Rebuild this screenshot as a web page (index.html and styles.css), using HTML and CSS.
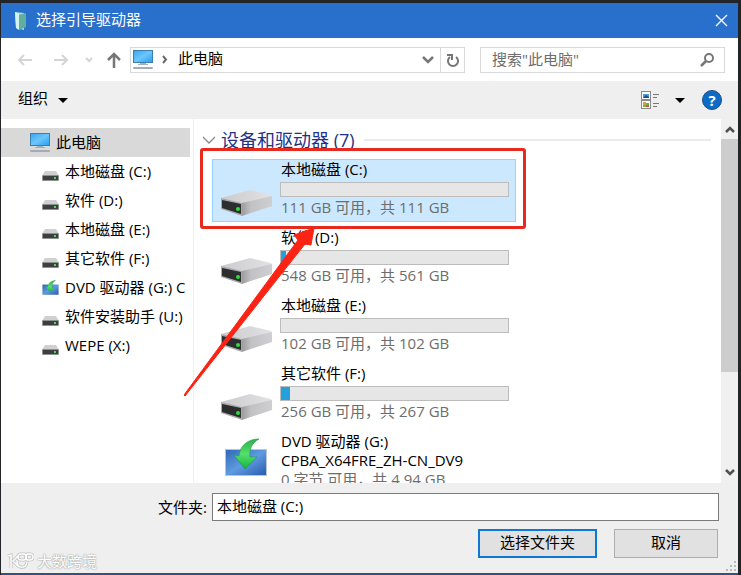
FILE: index.html
```html
<!DOCTYPE html>
<html lang="zh-CN">
<head>
    <meta charset="UTF-8">
    <meta name="viewport" content="width=device-width, initial-scale=1.0">
    <title>选择引导驱动器</title>
    <link rel="stylesheet" href="styles.css">
</head>
<body>
    <!-- shared icons -->
    <svg class="sprite" aria-hidden="true">
        <defs>
            <linearGradient id="driveTop" x1="0" y1="0" x2="1" y2="0">
                <stop offset="0" stop-color="#cbcbcd"/>
                <stop offset="1" stop-color="#e2e2e4"/>
            </linearGradient>
            <linearGradient id="driveSide" x1="0" y1="0" x2="1" y2="0">
                <stop offset="0" stop-color="#9c9c9e"/>
                <stop offset=".3" stop-color="#c2c2c4"/>
                <stop offset="1" stop-color="#cfcfd1"/>
            </linearGradient>
            <linearGradient id="screen" x1="0" y1="0" x2="1" y2="1">
                <stop offset="0" stop-color="#3aa8f0"/>
                <stop offset=".5" stop-color="#6cc6fb"/>
                <stop offset="1" stop-color="#2ba0ee"/>
            </linearGradient>
            <linearGradient id="dvd" x1="0" y1="0" x2="1" y2="1">
                <stop offset="0" stop-color="#2f68b8"/>
                <stop offset=".5" stop-color="#5f9be0"/>
                <stop offset="1" stop-color="#2a5cae"/>
            </linearGradient>
            <linearGradient id="green" x1="0" y1="0" x2="0" y2="1">
                <stop offset="0" stop-color="#2fae4c"/>
                <stop offset=".5" stop-color="#55e06c"/>
                <stop offset="1" stop-color="#12b43a"/>
            </linearGradient>
        </defs>
        <symbol id="drive" viewBox="0 0 52 27">
            <path d="M1 9 30 1 51 6 52 8 23 16z" fill="url(#driveTop)"/>
            <path d="M22 14 52 7V17L22 27z" fill="url(#driveSide)"/>
            <path d="M1 9 22 14V27L1 20z" fill="#a9a9aa"/>
            <path d="M2 11 21 15V25L2 19z" fill="#2c2d2f"/>
            <circle cx="18" cy="20" r="2" fill="#2fdc3c"/>
        </symbol>
        <symbol id="driveSmall" viewBox="0 0 17 10">
            <path d="M3 0H14L17 5H0z" fill="#cfd0d2"/>
            <rect y="4" width="17" height="6" rx="1" fill="#8e9092"/>
            <rect x="1" y="5" width="15" height="4" fill="#3c3e40"/>
            <rect x="12" y="6" width="2" height="2" fill="#43e04c"/>
        </symbol>
        <symbol id="computer" viewBox="0 0 20 19">
            <rect x="0" y="0" width="20" height="13" fill="#3b7fae"/>
            <rect x="1" y="1" width="18" height="11" fill="url(#screen)"/>
            <path d="M7 13H13V14H15V15H5V14H7z" fill="#9fb1c0"/>
            <rect y="17" width="20" height="2" rx="1" fill="#a2abb7"/>
        </symbol>
        <symbol id="disc" viewBox="0 0 42 38">
            <rect x="0" y="11" width="42" height="27" fill="#b9c6d4"/>
            <rect x="1" y="12" width="40" height="25" fill="url(#dvd)"/>
            <path d="M34 1C23 1 15 7 14 18L9 17 20 31 32 19 25 19C24 11 27 5 34 1z" fill="url(#green)" stroke="#1f9c42" stroke-width=".6"/>
        </symbol>
    </svg>

    <div class="dialog">
        <div class="title-bar">
            <svg class="title-icon" width="14" height="20" viewBox="0 0 14 20">
                <path d="M1 1 10 2V19L2 17z" fill="#a8dfd5"/>
                <path d="M4 4 12 2V16L5 19z" fill="#5fae9f"/>
                <path d="M1 1 5 3V19L2 17z" fill="#d3f3ec"/>
            </svg>
            <span class="title">选择引导驱动器</span>
            <button class="close" type="button" aria-label="关闭">
                <svg width="13" height="13" viewBox="0 0 13 13"><path d="M1 1 12 12M12 1 1 12" stroke="#fff" stroke-width="1.4"/></svg>
            </button>
        </div>

        <div class="nav-bar">
            <button class="icon-btn back" type="button" aria-label="后退">
                <svg width="16" height="14" viewBox="0 0 16 14"><path d="M15 7H2M7 2 2 7 7 12" fill="none" stroke="#d4d4d4" stroke-width="2"/></svg>
            </button>
            <button class="icon-btn forward" type="button" aria-label="前进">
                <svg width="16" height="14" viewBox="0 0 16 14"><path d="M1 7H14M9 2 14 7 9 12" fill="none" stroke="#d4d4d4" stroke-width="2"/></svg>
            </button>
            <button class="icon-btn recent" type="button" aria-label="最近的位置">
                <svg width="8" height="6" viewBox="0 0 8 6"><path d="M1 1 4 4 7 1" fill="none" stroke="#d4d4d4" stroke-width="2"/></svg>
            </button>
            <button class="icon-btn up" type="button" aria-label="上移">
                <svg width="14" height="16" viewBox="0 0 14 16"><path d="M7 16V2M1 8 7 2 13 8" fill="none" stroke="#767676" stroke-width="2.500"/></svg>
            </button>
            <div class="address">
                <svg width="20" height="19"><use href="#computer"/></svg>
                <svg class="crumb-arrow" width="6" height="9" viewBox="0 0 6 9"><path d="M1 1 4 4.500 1 8" fill="none" stroke="#6a6a6a" stroke-width="2"/></svg>
                <span class="crumb">此电脑</span>
                <button class="icon-btn history" type="button" aria-label="历史记录">
                    <svg width="12" height="8" viewBox="0 0 12 8"><path d="M1 1 6 6 11 1" fill="none" stroke="#767676" stroke-width="2.500"/></svg>
                </button>
                <button class="icon-btn refresh" type="button" aria-label="刷新">
                    <svg width="13" height="14" viewBox="0 0 13 14"><path d="M10 4A5 5 0 1 1 4 4M1 2H6V7" fill="none" stroke="#767676" stroke-width="2"/></svg>
                </button>
            </div>
            <div class="search">
                <input type="text" aria-label="搜索" placeholder='搜索"此电脑"'>
                <svg width="15" height="15" viewBox="0 0 15 15"><circle cx="9" cy="6" r="4" fill="none" stroke="#767676" stroke-width="2"/><path d="M6 9 1 14" stroke="#767676" stroke-width="2.500"/></svg>
            </div>
        </div>

        <div class="command-bar">
            <button class="organize" type="button"><span>组织</span>
                <svg width="10" height="5" viewBox="0 0 10 5"><path d="M0 0H10L5 5z"/></svg>
            </button>
            <button class="icon-btn view" type="button" aria-label="视图">
                <svg width="18" height="18" viewBox="0 0 18 18">
                    <rect x=".5" y=".5" width="9" height="8" fill="#fff" stroke="#8a8a8a"/>
                    <rect x=".5" y="9.500" width="9" height="8" fill="#fff" stroke="#8a8a8a"/>
                    <rect x="2" y="3" width="6" height="4" fill="#4b9be0"/>
                    <path d="M2 7 5 4 8 6V7z" fill="#234f80"/>
                    <rect x="2" y="12" width="6" height="4" fill="#76b043"/>
                    <rect x="2" y="11" width="3" height="3" fill="#d9a13c"/>
                    <rect x="5" y="14" width="3" height="2" fill="#cc5b3a"/>
                    <path d="M12 3.500H18M12 6.500H16M12 12.500H18M12 15.500H16" stroke="#777"/>
                </svg>
            </button>
            <button class="icon-btn view-menu" type="button" aria-label="更多选项">
                <svg width="10" height="5" viewBox="0 0 10 5"><path d="M0 0H10L5 5z"/></svg>
            </button>
            <button class="help" type="button" aria-label="帮助">?</button>
        </div>

        <div class="content">
            <nav class="tree">
                <a class="root" href="#"><svg width="20" height="19"><use href="#computer"/></svg><span>此电脑</span></a>
                <a href="#"><svg width="17" height="10"><use href="#driveSmall"/></svg><span>本地磁盘 (C:)</span></a>
                <a href="#"><svg width="17" height="10"><use href="#driveSmall"/></svg><span>软件 (D:)</span></a>
                <a href="#"><svg width="17" height="10"><use href="#driveSmall"/></svg><span>本地磁盘 (E:)</span></a>
                <a href="#"><svg width="17" height="10"><use href="#driveSmall"/></svg><span>其它软件 (F:)</span></a>
                <a class="dvd" href="#"><svg width="17" height="15"><use href="#disc"/></svg><span>DVD 驱动器 (G:) C</span></a>
                <a href="#"><svg width="17" height="10"><use href="#driveSmall"/></svg><span>软件安装助手 (U:)</span></a>
                <a href="#"><svg width="17" height="10"><use href="#driveSmall"/></svg><span>WEPE (X:)</span></a>
            </nav>

            <main class="files">
                <h2 class="group">
                    <svg width="14" height="8" viewBox="0 0 14 8"><path d="M1 1 7 7 13 1" fill="none" stroke="#8a8a8a" stroke-width="1.300"/></svg>
                    设备和驱动器 (7)
                </h2>
                <div class="item selected">
                    <svg class="drive" width="52" height="27"><use href="#drive"/></svg>
                    <div class="info">
                        <div class="name">本地磁盘 (C:)</div>
                        <div class="bar"><div class="used" style="width: 0%"></div></div>
                        <div class="space">111 GB 可用，共 111 GB</div>
                    </div>
                </div>
                <div class="item">
                    <svg class="drive" width="52" height="27"><use href="#drive"/></svg>
                    <div class="info">
                        <div class="name">软件 (D:)</div>
                        <div class="bar"><div class="used" style="width: 2%"></div></div>
                        <div class="space">548 GB 可用，共 561 GB</div>
                    </div>
                </div>
                <div class="item">
                    <svg class="drive" width="52" height="27"><use href="#drive"/></svg>
                    <div class="info">
                        <div class="name">本地磁盘 (E:)</div>
                        <div class="bar"><div class="used" style="width: 0%"></div></div>
                        <div class="space">102 GB 可用，共 102 GB</div>
                    </div>
                </div>
                <div class="item">
                    <svg class="drive" width="52" height="27"><use href="#drive"/></svg>
                    <div class="info">
                        <div class="name">其它软件 (F:)</div>
                        <div class="bar"><div class="used" style="width: 4%"></div></div>
                        <div class="space">256 GB 可用，共 267 GB</div>
                    </div>
                </div>
                <div class="item">
                    <svg class="disc" width="42" height="38"><use href="#disc"/></svg>
                    <div class="info">
                        <div class="name">DVD 驱动器 (G:)</div>
                        <div class="name">CPBA_X64FRE_ZH-CN_DV9</div>
                        <div class="space">0 字节 可用，共 4.94 GB</div>
                    </div>
                </div>
            </main>

            <div class="scrollbar">
                <svg width="10" height="7" viewBox="0 0 10 7"><path d="M1 6 5 2 9 6" fill="none" stroke="#505050" stroke-width="2.500"/></svg>
                <div class="track"><div class="thumb"></div></div>
                <svg width="10" height="7" viewBox="0 0 10 7"><path d="M1 1 5 5 9 1" fill="none" stroke="#505050" stroke-width="2.500"/></svg>
            </div>
        </div>

        <div class="footer">
            <div class="folder-row">
                <label for="folder">文件夹:</label>
                <input type="text" id="folder" value="本地磁盘 (C:)">
            </div>
            <div class="actions">
                <button class="btn primary" type="button">选择文件夹</button>
                <button class="btn" type="button">取消</button>
            </div>
            <svg class="grip" width="10" height="10" viewBox="0 0 10 10"><path d="M8 0h2v2H8zM8 4h2v2H8zM8 8h2v2H8zM4 4h2v2H4zM4 8h2v2H4zM0 8h2v2H0z" fill="#b9b9b9"/></svg>
            <div class="watermark">
                <svg width="27" height="18" viewBox="0 0 27 18"><path d="M1 4 4 3V16M11 4 6 9 12 15M10 10C11 17 19 17 20 10M13 2H17C20 2 20 8 17 8H14C10 8 10 2 14 2M20 2H23C27 2 27 8 23 8H21C18 8 18 2 21 2" fill="none" stroke="#bdbdbd" stroke-width="3"/><path d="M1 4 4 3V16M11 4 6 9 12 15M10 10C11 17 19 17 20 10M13 2H17C20 2 20 8 17 8H14C10 8 10 2 14 2M20 2H23C27 2 27 8 23 8H21C18 8 18 2 21 2" fill="none" stroke="#fff" stroke-width="1.500"/></svg>
                大数跨境
            </div>
        </div>

        <!-- highlight drawn over the list -->
        <div class="highlight"></div>
        <svg class="arrow" width="132" height="168" viewBox="0 0 132 168"><path d="M0 167 114 12 110 7 130 0 127 17 121 16 1 168z" fill="#fb2414" stroke="#fb2414" stroke-linejoin="round"/></svg>
    </div>
</body>
</html>
```
FILE: styles.css
```css
* {
    box-sizing: border-box;
}
body {
    margin: 0;
    background-color: #222427;
    font-family: "Open Sans", "Noto Sans CJK SC", sans-serif;
    font-size: 15px;
    line-height: 20px;
    color: #000;
}
button, input {
    font: inherit;
    color: inherit;
}
button {
    padding: 0;
    border: none;
    background: none;
}
svg {
    display: block;
    flex: none;
}
a {
    color: inherit;
    text-decoration: none;
}
.sprite {
    position: absolute;
    width: 0;
    height: 0;
}
.dialog {
    position: relative;
    display: flex;
    flex-direction: column;
    min-height: 100vh;
    border: solid #222427;
    border-width: 3px 3px 0 1px;
    background-color: #fff;
}

/* title */
.title-bar {
    display: flex;
    align-items: center;
    height: 35px;
    padding: 0 10px 0 13px;
    background-color: #2970cd;
    color: #fff;
}
.title {
    flex: 1;
    margin-left: 8px;
}
.title, .crumb, .organize span {
    padding-bottom: 4px;
}

/* navigation */
.nav-bar {
    display: flex;
    align-items: center;
    height: 43px;
    padding: 0 13px 0 16px;
}
.icon-btn {
    display: flex;
    align-items: center;
    justify-content: center;
}
.forward {
    margin-left: 20px;
}
.recent {
    margin-left: 16px;
}
.up {
    margin: 0 9px 0 14px;
}
.address {
    flex: 1;
    display: flex;
    align-items: center;
    height: 26px;
    padding-left: 2px;
    border: 1px solid #d9d9d9;
}
.crumb-arrow {
    margin: 0 10px 0 9px;
}
.crumb {
    flex: 1;
}
.history {
    width: 24px;
}
.refresh {
    width: 24px;
    height: 24px;
    border-left: 1px solid #d9d9d9;
}
.search {
    display: flex;
    align-items: center;
    width: 245px;
    height: 26px;
    margin-left: 15px;
    padding: 0 9px 0 11px;
    border: 1px solid #d9d9d9;
}
.search input {
    flex: 1;
    min-width: 0;
    padding: 0 0 2px;
    border: none;
    outline: none;
}
.search input::placeholder {
    color: #6d6d6d;
    opacity: 1;
}

/* commands */
.command-bar {
    display: flex;
    align-items: center;
    height: 38px;
    padding: 0 16px 0 17px;
    background-color: #efefef;
}
.organize {
    display: flex;
    align-items: center;
    gap: 10px;
    margin-right: auto;
}
.view-menu {
    margin: 0 17px 0 16px;
}
.help {
    width: 20px;
    height: 20px;
    border: 1px solid #1c4f86;
    border-radius: 50%;
    background-color: #0b6bc6;
    color: #fff;
    font-weight: bold;
    line-height: 18px;
}

/* tree and list */
.content {
    display: flex;
    height: 364px;
}
.tree {
    flex: none;
    width: 193px;
    padding: 9px 3px 0 0;
    border-right: 1px solid #f0f0f0;
}
.tree a {
    display: flex;
    align-items: center;
    gap: 6px;
    height: 29px;
    padding-left: 41px;
    white-space: nowrap;
    overflow: hidden;
}
.tree a svg {
    margin-top: 8px;
}
.tree span {
    padding-bottom: 2px;
}
.tree .root {
    padding-left: 29px;
    background-color: #d9d9d9;
}
.tree .root svg, .tree .dvd svg {
    margin-top: 0;
}
.files {
    flex: 1;
    min-width: 0;
    padding: 9px 10px 0 8px;
    overflow: hidden;
}
.group {
    display: flex;
    align-items: center;
    gap: 5px;
    height: 24px;
    margin: 0 0 7px;
    font-size: 18px;
    font-weight: normal;
    color: #1e3287;
}
.group::after {
    content: "";
    flex: 1;
    height: 2px;
    margin-left: 4px;
    background-color: #ebebeb;
}
.item {
    display: flex;
    width: 304px;
    height: 63px;
    margin: 0 0 5px 10px;
    padding-left: 7px;
    border: 1px solid transparent;
}
.selected {
    border-color: #99d1ff;
    background-color: #cce8ff;
}
.drive {
    margin: 29px 8px 0 0;
}
.disc {
    margin: 6px 13px 0 5px;
}
.info {
    flex: 1;
    padding-right: 6px;
    white-space: nowrap;
}
.name, .space {
    height: 19px;
    padding-left: 1px;
    line-height: 18px;
}
.bar {
    height: 15px;
    margin: 3px 0 1px;
    border: 1px solid #bcbcbc;
    background-color: #e6e6e6;
}
.used {
    height: 13px;
    background-color: #26a0da;
}
.space {
    color: #6d6d6d;
}
.scrollbar {
    flex: none;
    display: flex;
    flex-direction: column;
    align-items: center;
    width: 17px;
    padding: 7px 0;
    background-color: #f0f0f0;
}
.track {
    flex: 1;
    width: 100%;
    margin: 6px 0;
}
.thumb {
    height: 72%;
    background-color: #cdcdcd;
}

/* footer */
.footer {
    position: relative;
    flex: 1;
    padding: 10px 19px 0 157px;
    border-bottom: 2px solid #34517c;
    background-color: #efefef;
}
.folder-row {
    display: flex;
    align-items: center;
    gap: 5px;
}
.folder-row input {
    flex: 1;
    min-width: 0;
    height: 28px;
    padding: 0 4px 3px;
    border: 1px solid #7a7a7a;
    background-color: #fff;
}
.actions {
    display: flex;
    justify-content: flex-end;
    gap: 17px;
    margin-top: 8px;
    padding-right: 1px;
}
.btn {
    width: 104px;
    height: 29px;
    padding-bottom: 3px;
    border: 1px solid #adadad;
    background-color: #e1e1e1;
}
.primary {
    width: 119px;
    border: 2px solid #0f78d4;
}
.grip {
    position: absolute;
    right: 2px;
    bottom: 2px;
}
.watermark {
    position: absolute;
    left: 6px;
    bottom: 2px;
    display: flex;
    align-items: center;
    gap: 3px;
    color: #fff;
    text-shadow: 0 0 2px #999, 0 0 1px #aaa;
}

/* overlay */
.highlight {
    position: absolute;
    left: 199px;
    top: 145px;
    width: 326px;
    height: 81px;
    border: 3px solid #e8291d;
    border-radius: 3px;
}
.arrow {
    position: absolute;
    left: 183px;
    top: 225px;
}
```
